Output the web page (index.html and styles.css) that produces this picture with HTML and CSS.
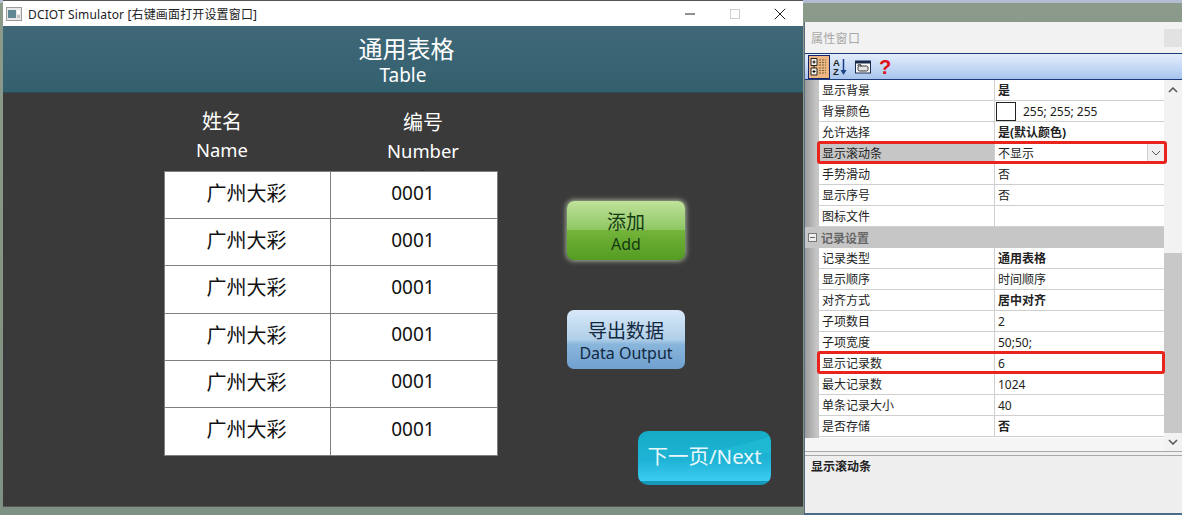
FILE: index.html
```html
<!DOCTYPE html>
<html lang="zh">
<head>
<meta charset="utf-8">
<title>DCIOT Simulator</title>
<link rel="stylesheet" href="styles.css">
</head>
<body>
<div class="desktop">
  <section class="sim">
    <div class="titlebar">
      <svg class="appicon" width="16" height="14" viewBox="0 0 16 14"><rect x=".5" y=".5" width="15" height="13" fill="#e8e8e8" stroke="#9a9a9a"/><rect x="2" y="3" width="8" height="8" fill="#5f8794"/><rect x="11" y="3" width="3" height="4" fill="#fff"/><rect x="11" y="8" width="3" height="3" fill="#c4c4c4"/></svg>
      <span class="apptitle">DCIOT Simulator [右键画面打开设置窗口]</span>
      <div class="wincontrols">
        <svg width="12" height="12" viewBox="0 0 12 12"><path d="M1 6h10" stroke="#222" stroke-width="1"/></svg>
        <svg width="12" height="12" viewBox="0 0 12 12"><rect x="1.5" y="1.5" width="9" height="9" fill="none" stroke="#cfcfcf"/></svg>
        <svg width="12" height="12" viewBox="0 0 12 12"><path d="M.8.8l10.4 10.4M11.2.8L.8 11.2" stroke="#222" stroke-width="1"/></svg>
      </div>
    </div>
    <header class="banner">
      <div class="banner-cn">通用表格</div>
      <div class="banner-en">Table</div>
    </header>
    <main class="stage">
      <div class="tablecol">
        <div class="heads">
          <div class="head"><div>姓名</div><div class="head-en">Name</div></div>
          <div class="head second"><div>编号</div><div class="head-en">Number</div></div>
        </div>
        <div class="grid">
          <div class="cell">广州大彩</div><div class="cell num">0001</div>
          <div class="cell">广州大彩</div><div class="cell num">0001</div>
          <div class="cell">广州大彩</div><div class="cell num">0001</div>
          <div class="cell">广州大彩</div><div class="cell num">0001</div>
          <div class="cell">广州大彩</div><div class="cell num">0001</div>
          <div class="cell">广州大彩</div><div class="cell num">0001</div>
        </div>
      </div>
      <div class="actions">
        <button class="btn add"><span class="cn">添加</span><span class="en">Add</span></button>
        <button class="btn output"><span class="cn">导出数据</span><span class="en">Data Output</span></button>
        <button class="next">下一页/Next</button>
      </div>
    </main>
  </section>

  <aside class="props">
    <div class="props-title">
      <span>属性窗口</span>
      <span class="pin"></span>
    </div>
    <div class="toolbar">
      <span class="tool active">
        <svg width="18" height="20" viewBox="0 0 18 20"><path d="M1 1.500h6v7H1zM1 11h6v7H1z" fill="#f7f3ea" stroke="#222"/><path d="M2.500 5h3M4 3.500v3M2.500 14.500h3" stroke="#000"/><path d="M4 13v3" stroke="#000"/><path d="M4 8.500V11" stroke="#222"/><path d="M9 3h7M9 5.500h7M9 8h7M9 11h7M9 13.500h7M9 16h7" stroke="#7a6238" stroke-dasharray="2 1"/></svg>
      </span>
      <span class="tool az-tool">
        <svg width="16" height="20" viewBox="0 0 16 20"><text class="az" x="0" y="9">A</text><text class="az" x="0" y="18">Z</text><path d="M10.500 2v13" stroke="#1c3f8c" stroke-width="1.500"/><path d="M7.500 13h6l-3 5z" fill="#1c3f8c"/></svg>
      </span>
      <span class="tool win-tool">
        <svg width="18" height="18" viewBox="0 0 18 18"><rect x="1.500" y="3" width="15" height="12" fill="#fff" stroke="#1a2a4a"/><rect x="1.500" y="3" width="15" height="2.500" fill="#1a2a4a"/><rect x="4" y="8" width="10" height="5" rx="1.500" fill="#e6e6e6" stroke="#333"/><path d="M4 8V6.800h3V8" fill="none" stroke="#333"/></svg>
      </span>
      <span class="tool help">?</span>
    </div>
    <div class="list">
      <div class="rows">
        <div class="row"><span class="k">显示背景</span><span class="v b">是</span></div>
        <div class="row"><span class="k">背景颜色</span><span class="v"><i class="swatch"></i>255; 255; 255</span></div>
        <div class="row"><span class="k">允许选择</span><span class="v b">是(默认颜色)</span></div>
        <div class="row selected mark wide"><span class="k">显示滚动条</span><span class="v">不显示<span class="drop"><svg width="10" height="6" viewBox="0 0 10 6"><path d="M1 1l4 4 4-4" fill="none" stroke="#555" stroke-width="1"/></svg></span></span></div>
        <div class="row"><span class="k">手势滑动</span><span class="v">否</span></div>
        <div class="row"><span class="k">显示序号</span><span class="v">否</span></div>
        <div class="row"><span class="k">图标文件</span><span class="v"></span></div>
        <div class="group"><span class="toggle"></span>记录设置</div>
        <div class="row"><span class="k">记录类型</span><span class="v b">通用表格</span></div>
        <div class="row"><span class="k">显示顺序</span><span class="v">时间顺序</span></div>
        <div class="row"><span class="k">对齐方式</span><span class="v b">居中对齐</span></div>
        <div class="row"><span class="k">子项数目</span><span class="v">2</span></div>
        <div class="row"><span class="k">子项宽度</span><span class="v">50;50;</span></div>
        <div class="row mark"><span class="k">显示记录数</span><span class="v">6</span></div>
        <div class="row"><span class="k">最大记录数</span><span class="v">1024</span></div>
        <div class="row"><span class="k">单条记录大小</span><span class="v">40</span></div>
        <div class="row"><span class="k">是否存储</span><span class="v b">否</span></div>
      </div>
      <div class="scroll">
        <svg width="10" height="6" viewBox="0 0 10 6"><path d="M1 5l4-4 4 4" fill="none" stroke="#555" stroke-width="1.500"/></svg>
        <div class="track"><div class="thumb"></div></div>
        <svg width="10" height="6" viewBox="0 0 10 6"><path d="M1 1l4 4 4-4" fill="none" stroke="#555" stroke-width="1.500"/></svg>
      </div>
    </div>
    <div class="desc">显示滚动条</div>
  </aside>
</div>
</body>
</html>
```
FILE: styles.css
```css
* { box-sizing: border-box; }
html, body { margin: 0; padding: 0; }
body {
  width: 1182px;
  height: 515px;
  overflow: hidden;
  font-family: "Noto Sans", "Noto Sans CJK SC", sans-serif;
}
.desktop {
  position: relative;
  width: 1182px;
  height: 515px;
  overflow: hidden;
  background: linear-gradient(#b4bcd2 0, #b4bcd2 3px, #8b9a8b 3px, #7f9182 100%);
}

/* Simulator window */
.sim {
  position: absolute;
  left: 3px;
  top: 1px;
  width: 800px;
  height: 505px;
  display: flex;
  flex-direction: column;
  box-shadow: 0 -1px 0 #555, 0 1px 0 #555;
}
.titlebar {
  height: 25px;
  flex: none;
  background: #fff;
  display: flex;
  align-items: center;
  padding-left: 3px;
  color: #222;
  font-size: 12px;
}
.appicon { flex: none; margin-right: 6px; }
.apptitle { letter-spacing: .15px; }
.wincontrols {
  margin-left: auto;
  display: flex;
  gap: 33px;
  padding-right: 17px;
}
.banner {
  height: 67px;
  flex: none;
  background: linear-gradient(#406878, #34606e);
  color: #fff;
  text-align: center;
  padding-top: 8px;
  border-bottom: 1px solid #2c4a52;
}
.banner-cn { font-size: 24px; line-height: 30px; padding-left: 7px; }
.banner-en { font-size: 19px; line-height: 22px; }
.stage {
  flex: 1;
  background: #3a3a3a;
  display: flex;
  padding-left: 161px;
}
.tablecol { width: 334px; flex: none; }
.heads { display: flex; gap: 85px; height: 78px; padding-top: 14px; }
.head {
  width: 116px;
  color: #fff;
  text-align: center;
  font-size: 20px;
  line-height: 29px;
}
.second { margin-top: 1px; }
.head-en { font-size: 18.400px; line-height: 27px; }
.grid {
  position: relative;
  height: 285px;
  display: grid;
  grid-template-columns: 166px 166px;
  grid-template-rows: repeat(6, 1fr);
  background: #fff;
  border: 1px solid #808080;
}
.grid::before {
  content: "";
  position: absolute;
  left: 257px;
  top: -2px;
  width: 1px;
  height: 1px;
  background: #111;
}
.cell {
  display: flex;
  align-items: center;
  justify-content: center;
  color: #111;
  font-size: 20px;
  padding: 0 2px 5px 0;
  border-bottom: 1px solid #808080;
}
.cell:nth-child(odd) { border-right: 1px solid #808080; }
.cell:nth-last-child(-n+2) { border-bottom: 0; }
.num { font-size: 19px; padding: 0 2px 5px 0; }

.actions {
  margin-left: 69px;
  padding-top: 108px;
  display: flex;
  flex-direction: column;
  align-items: flex-start;
}
.btn {
  width: 118px;
  height: 59px;
  border: 0;
  padding: 2px 0 0;
  border-radius: 7px;
  font-family: inherit;
  display: flex;
  flex-direction: column;
  align-items: center;
  justify-content: center;
}
.btn .cn { font-size: 19px; line-height: 24px; }
.btn .en { font-size: 16px; line-height: 20px; }
.add {
  background: linear-gradient(#c0e29a 0, #8fc764 49%, #74b43a 50%, #549c22 100%);
  color: #143a10;
  box-shadow: 0 0 5px 1px #a8b69c;
}
.output {
  margin-top: 50px;
  background: linear-gradient(#d8e8f8 0, #b0cfe8 50%, #8ab6dc 58%, #6fa0cf 100%);
  color: #12283f;
}
.next {
  margin-top: 62px;
  margin-left: 71px;
  width: 133px;
  height: 54px;
  border: 0;
  padding: 0 0 7px;
  border-radius: 10px;
  font-family: inherit;
  font-size: 20.500px;
  color: #e8f8fc;
  background:
    linear-gradient(165deg, transparent 72%, rgba(40, 200, 220, .35) 72.500%) top / 100% 40% no-repeat,
    linear-gradient(#14acc6 0, #1fb4d6 55%, #3cccf2 92%, #149ab8 93%, #149ab8 100%);
}

/* Property window */
.props {
  position: absolute;
  left: 804px;
  top: 22px;
  width: 378px;
  height: 493px;
  background: #f0f0f0;
  display: flex;
  flex-direction: column;
  border-left: 1px solid #5a6a80;
  border-bottom: 2px solid #4a6a8a;
}
.props-title {
  height: 31px;
  flex: none;
  background: #f2f2f2;
  color: #a8a8a8;
  font-size: 12px;
  display: flex;
  align-items: center;
  justify-content: space-between;
  padding-left: 6px;
  letter-spacing: .3px;
}
.pin { width: 18px; height: 18px; background: #e2e2e2; }
.toolbar {
  height: 27px;
  flex: none;
  display: flex;
  align-items: center;
  gap: 3px;
  padding-left: 3px;
  background: linear-gradient(#e4eefc, #c0d6f4 60%, #a8c4ec);
  border-top: 1px solid #1c3a78;
  border-bottom: 1px solid #1c3a78;
}
.tool {
  height: 20px;
  display: flex;
  align-items: center;
  justify-content: center;
}
.tool.active {
  width: 22px;
  height: 24px;
  background: #ecb582;
  border: 1px solid #14246c;
}
.az-tool { width: 16px; }
.win-tool { width: 18px; margin-left: 2px; }
.az { font-size: 9.500px; font-weight: 700; fill: #222; font-family: "Liberation Sans", sans-serif; }
.help {
  width: 10px;
  margin-left: 5px;
  color: #e01018;
  font-family: "Liberation Sans", sans-serif;
  font-weight: 700;
  font-size: 20px;
  line-height: 20px;
}
.list {
  height: 372px;
  flex: none;
  display: flex;
  background: #f5f5f5;
  border-bottom: 1px solid #a8a8a8;
}
.rows {
  width: 359px;
  flex: none;
  height: 358px;
  background: linear-gradient(90deg, #9c9c9c 0, #c6c6c6 12px, #c6c6c6 14px, #fff 14px);
  font-size: 12px;
  color: #222;
}
.row {
  position: relative;
  height: 21px;
  margin-left: 14px;
  display: flex;
  align-items: center;
  background: #fff;
  border-bottom: 1px solid #cfcfcf;
}
.k {
  width: 176px;
  height: 100%;
  flex: none;
  padding-left: 3px;
  display: flex;
  align-items: center;
  border-right: 1px solid #cfcfcf;
}
.v {
  flex: 1;
  height: 100%;
  padding-left: 3px;
  display: flex;
  align-items: center;
  min-width: 0;
}
.b { font-weight: 700; }
.swatch {
  width: 20px;
  height: 19px;
  flex: none;
  border: 1px solid #222;
  background: #fff;
  margin-right: 7px;
  margin-left: -2px;
}
.selected .k { background: #c6c6c6; }
.drop {
  margin-left: auto;
  width: 17px;
  height: 100%;
  display: flex;
  align-items: center;
  justify-content: center;
  background: #f0f0f0;
  border-left: 1px solid #cfcfcf;
}
.mark::after {
  content: "";
  position: absolute;
  left: -2px;
  right: -1px;
  top: -2px;
  bottom: -1px;
  border: 3px solid #e8241c;
  border-radius: 3px;
}
.mark.wide::after { right: -3px; }
.group {
  height: 21px;
  background: #c6c6c6;
  color: #666;
  font-weight: 700;
  display: flex;
  align-items: center;
}
.toggle {
  width: 9px;
  height: 9px;
  margin: 0 4px 0 3px;
  border: 1px solid #777;
  background: linear-gradient(#666, #666) center / 5px 1px no-repeat #eee;
}
.scroll {
  flex: 1;
  display: flex;
  flex-direction: column;
  align-items: center;
  padding: 7px 0 6px;
  gap: 6px;
  background: #f2f2f2;
}
.track { flex: 1; width: 100%; display: flex; flex-direction: column; justify-content: flex-end; }
.thumb { height: 180px; margin-bottom: 0; background: #c8c8c8; }
.desc {
  flex: 1;
  margin-top: 3px;
  background: #eeeeee;
  border-top: 1px solid #a8a8a8;
  padding: 1px 6px;
  font-size: 12px;
  font-weight: 700;
  color: #222;
}
```
